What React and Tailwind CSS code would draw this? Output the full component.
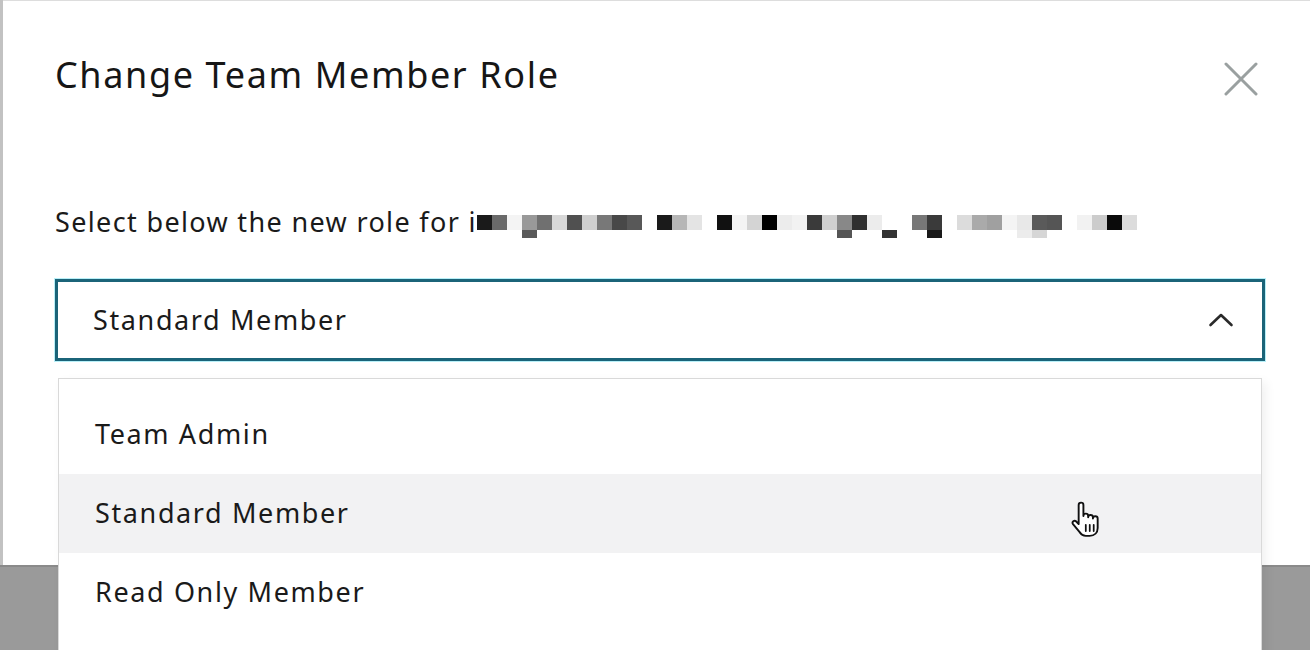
import React from "react";

const FONT = { fontFamily: "'Noto Sans', Lato, sans-serif" };

// Pixelated (redacted) address tiles: first row and descender row
const ROW_TOP = [
  "bg-[#1a1a1a]", "bg-[#6a6a6a]", "bg-[#f4f4f4]", "bg-[#999999]", "bg-[#707070]", "bg-[#d8d8d8]",
  "bg-[#505050]", "bg-[#cfcfcf]", "bg-[#787878]", "bg-[#484848]", "bg-[#585858]", "bg-white",
  "bg-[#1a1a1a]", "bg-[#b6b6b6]", "bg-[#e4e4e4]", "bg-white", "bg-[#111111]", "bg-[#f4f4f4]",
  "bg-[#d4d4d4]", "bg-[#000000]", "bg-[#ececec]", "bg-[#f2f2f2]", "bg-[#3a3a3a]", "bg-[#d0d0d0]",
  "bg-[#888888]", "bg-[#303030]", "bg-[#ececec]", "bg-white", "bg-white", "bg-[#777777]",
  "bg-[#3a3a3a]", "bg-white", "bg-[#dcdcdc]", "bg-[#aaaaaa]", "bg-[#a0a0a0]", "bg-[#f4f4f4]",
  "bg-[#e8e8e8]", "bg-[#5a5a5a]", "bg-[#555555]", "bg-white", "bg-[#f2f2f2]", "bg-[#cccccc]",
  "bg-[#0a0a0a]", "bg-[#dcdcdc]",
];

const ROW_BOTTOM = {
  3: "bg-[#5a5a5a]",
  24: "bg-[#555555]",
  27: "bg-[#333333]",
  30: "bg-[#1a1a1a]",
  36: "bg-[#ececec]",
  37: "bg-[#d6d6d6]",
};

function Mosaic() {
  return (
    <div className="flex flex-col mt-[8px]">
      <div className="flex">
        {ROW_TOP.map((c, i) => (
          <span key={i} className={`block w-[15px] h-[15px] ${c}`} />
        ))}
      </div>
      <div className="flex">
        {ROW_TOP.map((_, i) => (
          <span key={i} className={`block w-[15px] h-[8px] ${ROW_BOTTOM[i] || "bg-white"}`} />
        ))}
      </div>
    </div>
  );
}

function CloseIcon() {
  return (
    <svg width="34" height="34" viewBox="0 0 34 34" fill="none">
      <path d="M2 2 L32 32 M32 2 L2 32" stroke="#9aa0a0" strokeWidth="3" strokeLinecap="round" />
    </svg>
  );
}

function ChevronUp() {
  return (
    <svg width="26" height="16" viewBox="0 0 26 16" fill="none">
      <path d="M2.5 13 L13 3 L23.5 13" stroke="#2a2a2a" strokeWidth="2.6" strokeLinecap="round" strokeLinejoin="round" />
    </svg>
  );
}

function HandCursor() {
  return (
    <svg width="32" height="38" viewBox="0 0 20 24" fill="none">
      <path
        d="M6 2.5 a1.5 1.5 0 0 1 3 0 V9.5 a1.5 1.5 0 0 1 3 0 v0.8 a1.5 1.5 0 0 1 3 0 v0.8 a1.5 1.5 0 0 1 3 0 V17 c0 3 -2 5 -5 5 H10.5 c-2 0 -3 -1 -4 -2.5 L2.3 14.4 a1.3 1.3 0 0 1 2 -1.6 L6 14.6 Z"
        fill="#ffffff"
        stroke="#111111"
        strokeWidth="1.2"
        strokeLinejoin="round"
      />
      <path d="M10.5 15 v4 M13 15 v4 M15.5 15 v4" stroke="#111111" strokeWidth="1.1" strokeLinecap="round" />
    </svg>
  );
}

const OPTIONS = ["Team Admin", "Standard Member", "Read Only Member"];

export default function App() {
  return (
    <div className="w-[1310px] h-[650px] overflow-hidden bg-[#9a9a9a] flex flex-col" style={FONT}>
      <div className="flex h-[565px] shrink-0">
        {/* page behind the overlay */}
        <div className="w-[3px] shrink-0 bg-[#c2c2c2]" />
        {/* dialog */}
        <div className="relative w-[1314px] shrink-0 bg-white border-t border-[#dddddd] px-[52px]">
          <div className="flex items-start justify-between pt-[51px]">
            <h2 className="text-[36px] leading-[46px] tracking-[0.045em] text-[#161616] font-normal">
              Change Team Member Role
            </h2>
            <button className="mt-[10px] mr-[7px]">
              <CloseIcon />
            </button>
          </div>

          <div className="mt-[109px] flex items-start text-[27px] leading-[30px] tracking-[0.05em] text-[#1a1a1a]">
            <span>Select below the new role for i</span>
            <Mosaic />
          </div>

          <div className="relative mt-[41px]">
            <div className="h-[82px] flex items-center justify-between border-[3px] border-[#1b6479] shadow-[0_0_0_1px_#b8f0f8] pl-[35px] pr-[28px] text-[27px] tracking-[0.06em] text-[#1a1a1a]">
              <span>Standard Member</span>
              <ChevronUp />
            </div>

            {/* open listbox */}
            <div className="absolute left-[3px] right-[3px] top-[99px] h-[300px] bg-white border border-[#d9d9d9] shadow-[4px_4px_10px_rgba(0,0,0,0.06)] pt-[16px]">
              {OPTIONS.map((o) => (
                <div
                  key={o}
                  className={`relative h-[79px] flex items-center pl-[36px] text-[27px] tracking-[0.06em] text-[#1a1a1a] ${
                    o === "Standard Member" ? "bg-[#f2f2f3]" : "bg-white"
                  }`}
                >
                  {o}
                  {o === "Standard Member" && (
                    <span className="absolute left-[1010px] top-[27px]">
                      <HandCursor />
                    </span>
                  )}
                </div>
              ))}
            </div>
          </div>
        </div>
      </div>
      <div className="flex-1 border-t-2 border-[#8a8a8a] bg-[#9a9a9a]" />
    </div>
  );
}
